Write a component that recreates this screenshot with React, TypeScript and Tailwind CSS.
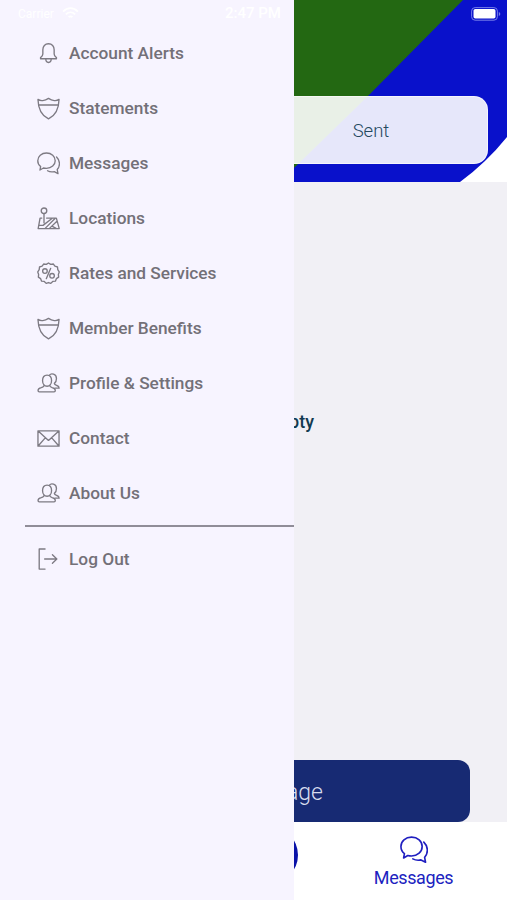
import type { ReactNode } from "react";

type IconProps = { className?: string };

function Svg({ children, className = "" }: { children: ReactNode; className?: string }) {
  return (
    <svg
      viewBox="0 0 24 24"
      className={`shrink-0 ${className || "size-[23px] text-[#7d7a83]"}`}
      fill="none"
      stroke="currentColor"
      strokeWidth="1.4"
      strokeLinejoin="round"
      strokeLinecap="round"
    >
      {children}
    </svg>
  );
}

const Bell = () => (
  <Svg>
    <path d="M12 1.800c-3.700 0-5.900 2.700-5.900 6.200v4.600c0 1.600-.6 2.600-2.400 3.700v1.200h16.600v-1.200c-1.800-1.100-2.400-2.100-2.400-3.700V8c0-3.500-2.200-6.200-5.900-6.200Z" />
    <path d="M9.200 17.800c0 2.200 1.200 3.600 2.800 3.600s2.800-1.400 2.800-3.600" />
  </Svg>
);

const Shield = () => (
  <Svg>
    <path d="M1 2.500c1.400 1 3.200 1.400 5 1.200 2.400-.2 4.300-1.100 6-2.300 1.700 1.200 3.600 2.100 6 2.300 1.800.2 3.600-.2 5-1.200C22.800 11 20.500 18.700 12 22.800 3.500 18.700 1.200 11 1 2.500Z" />
    <path d="M1.800 8.300h20.400" />
  </Svg>
);

const Chat = ({ className }: IconProps) => (
  <Svg className={className}>
    <path d="M9.900 1C4.700 1 .8 4.500.8 9c0 2.600 1.200 4.700 3 6.100l-.7 3.700 3.600-2.100c1 .3 2.100.4 3.200.4 5.200 0 9.100-3.600 9.100-8.100S15.100 1 9.900 1Z" />
    <path d="M20.400 5.200c3.800 3.600 4 9.600.7 13.100l.8 4.200-3.900-2c-2.500.5-5 .2-7-.9" />
  </Svg>
);

const MapPin = () => (
  <Svg>
    <circle cx="7.300" cy="3.900" r="2.900" />
    <path d="M7.300 6.900v9.500M5 11.600H3.200L1.200 22.500h22l-3-10.900H10M2 19.200h4.300L15.600 12M8.500 22.300 18.800 12M13 22.300l7.800-7.500M15.500 20l4.500 2.300" />
  </Svg>
);

const Percent = () => (
  <Svg>
    <path d="m12 1 2.300 1.500 2.800-.4 1.600 2.300 2.700.8.300 2.800 1.500 2.400-.9 2.600.3 2.800-2.400 1.600-1 2.600-2.800.3-2 2-2.400-.9-2.400.9-2-2-2.800-.3-1-2.600-2.400-1.600.3-2.800L.8 10.400 2.300 8l.3-2.800 2.700-.8 1.600-2.300 2.800.4Z" />
    <circle cx="8.300" cy="9.400" r="2.400" />
    <circle cx="15.700" cy="14.400" r="2.400" />
    <path d="m14.300 6.600-4.600 10.800" />
  </Svg>
);

const People = () => (
  <Svg>
    <path d="M15.200 8.900c0 3.300-2 6-4.700 6s-4.700-2.700-4.700-6 1.800-5.700 4.700-5.700 4.700 2.400 4.700 5.700Z" />
    <path d="M7.500 13.900c-.1 1.500-1.200 1.900-3.100 2.400-2.100.5-3.300 1.600-3.300 3.100 0 .9.500 1.300 1.300 1.300h15.400c.8 0 1.300-.4 1.300-1.300 0-1.500-1.200-2.600-3.300-3.100-1.700-.5-2.500-.9-2.600-2.400" />
    <path d="M13 3.200c1.700-2.300 7.300-1.500 7.300 3.500 0 2.300-.8 4.200-2.200 5.200.1 1.600 1.200 1.800 2.600 2.200 1.500.4 2.400 1.300 2.400 2.800h-4.500" />
  </Svg>
);

const Envelope = () => (
  <Svg>
    <path d="M1 4h22v16H1Z M1.200 4.200 12 14 22.800 4.200M1.200 19.800l7.400-8.400M22.800 19.800l-7.400-8.400" />
  </Svg>
);

const Exit = () => (
  <Svg>
    <path d="M8.400 1H2.300v21h6.100M8 11.500h12.500M16.100 7.100l4.600 4.400-4.600 4.400" />
  </Svg>
);

const items: { label: string; icon: ReactNode }[] = [
  { label: "Account Alerts", icon: <Bell /> },
  { label: "Statements", icon: <Shield /> },
  { label: "Messages", icon: <Chat /> },
  { label: "Locations", icon: <MapPin /> },
  { label: "Rates and Services", icon: <Percent /> },
  { label: "Member Benefits", icon: <Shield /> },
  { label: "Profile & Settings", icon: <People /> },
  { label: "Contact", icon: <Envelope /> },
  { label: "About Us", icon: <People /> },
];

function MenuRow({ label, icon }: { label: string; icon: ReactNode }) {
  return (
    <button className="flex h-[55px] w-full items-center gap-[9px] pl-[37px] text-left text-[17.3px] font-medium text-[#737078]">
      {icon}
      <span>{label}</span>
    </button>
  );
}

function Drawer() {
  return (
    <nav className="absolute inset-y-0 left-0 w-[294px] bg-[#f7f4ff] pt-[26px]">
      {items.map((item) => (
        <MenuRow key={item.label} {...item} />
      ))}
      <div className="mt-[4px] ml-[25px] h-[2px] bg-[#908d98]" />
      <div className="pt-[5px]">
        <MenuRow label="Log Out" icon={<Exit />} />
      </div>
    </nav>
  );
}

function StatusBar() {
  return (
    <div className="absolute inset-x-0 top-0 flex h-[27px] items-center pr-[6px] pl-[18px] text-white">
      <div className="flex w-[207px] items-center gap-2 text-[12px]">
        Carrier
        <svg viewBox="0 0 18 14" className="h-[13px] w-[17px]" fill="none" stroke="currentColor" strokeWidth="2">
          <path d="M1 5c5-5 11-5 16 0M4 8c3-3 7-3 10 0M7 11c1-1 3-1 4 0" />
        </svg>
      </div>
      <span className="text-[15px] font-medium">2:47 PM</span>
      <div className="flex flex-1 justify-end">
        <svg viewBox="0 0 30 14" className="h-[14px] w-[30px]">
          <rect x=".6" y=".6" width="25.800" height="12.600" rx="3.500" fill="none" stroke="#777ee9" />
          <rect x="2.500" y="2" width="22" height="9.500" rx="1.800" fill="white" />
          <path d="M27.800 5v4c2-.8 2-3.200 0-4Z" fill="#777ee9" />
        </svg>
      </div>
    </div>
  );
}

export default function App() {
  return (
    <div className="relative flex h-[900px] w-[507px] flex-col overflow-hidden bg-[#f1f0f5] font-['Roboto',sans-serif]">
      <header className="relative h-[182px] shrink-0 bg-[#0911cb] px-[19px] pt-24">
        <svg className="absolute inset-0 h-full w-full" viewBox="0 0 507 182">
          <path d="M0 0h463L368 96 294 168H0Z" fill="#236812" />
          <path d="M460 182Q486 163 507 137v45Z" fill="white" />
        </svg>
        <div className="relative flex h-[68px] rounded-[14px] border border-white/60 bg-white/90 text-[18.5px] font-light text-[#24495f]">
          <div className="flex-1" />
          <div className="flex flex-1 items-center justify-center pt-[3px] pl-[3px]">Sent</div>
        </div>
      </header>
      <main className="flex flex-1 flex-col justify-between">
        <div className="w-[314px] pt-[227px] text-right text-[18px] leading-[26px] font-medium text-[#123a50]">
          Empty
        </div>
        <button className="mr-[37px] ml-[37px] flex h-[62px] items-center rounded-[12px] bg-[#172a73] text-[23px] font-light text-[#d8dcee]">
          <span className="w-[286px] pt-[4px] text-right">New Message</span>
        </button>
      </main>
      <footer className="flex h-[78px] shrink-0 bg-white">
        <div className="flex flex-1 items-start justify-end">
          <div className="mt-[4px] size-[58px] rounded-full bg-[#0911a8]" />
        </div>
        <div className="flex w-[209px] justify-end pt-[14px] text-[#201fc0]">
          <div className="flex w-[187px] flex-col items-center">
            <Chat className="size-[28px]" />
            <span className="mt-[1px] text-[18px] leading-[26px] tracking-[-0.4px]">Messages</span>
          </div>
        </div>
      </footer>
      <Drawer />
      <StatusBar />
    </div>
  );
}
